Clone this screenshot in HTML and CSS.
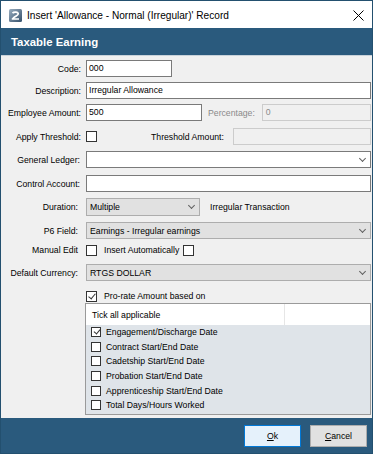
FILE: index.html
```html
<!DOCTYPE html>
<html>
<head>
<meta charset="utf-8">
<link rel="stylesheet" href="styles.css">
</head>
<body>
<div class="window">
  <div class="titlebar">
    <svg class="app-icon" width="13" height="13" viewBox="0 0 13 13">
      <defs>
        <linearGradient id="ig" x1="0" y1="0" x2="1" y2="1">
          <stop offset="0" stop-color="#9aaec0"/>
          <stop offset="1" stop-color="#34506b"/>
        </linearGradient>
      </defs>
      <rect x="0" y="0" width="13" height="13" rx="1.5" fill="url(#ig)"/>
      <path d="M3.5 4.2 C5 2.6 9.5 2.8 9.2 5 C9 6.4 6.8 6.8 5 8.4 L3.4 10 L10 10" fill="none" stroke="#fff" stroke-width="1.7" stroke-linejoin="round"/>
    </svg>
    <span class="title">Insert 'Allowance - Normal (Irregular)' Record</span>
    <svg class="close" width="11" height="11" viewBox="0 0 11 11">
      <path d="M0.5 0.5 L10.5 10.5 M10.5 0.5 L0.5 10.5" stroke="#000" stroke-width="1" fill="none"/>
    </svg>
  </div>
  <div class="header">Taxable Earning</div>
  <div class="form">
    <div class="row r-code">
      <span class="lbl">Code:</span>
      <div class="field"><span class="tb tb-code">000</span></div>
    </div>
    <div class="row r-desc">
      <span class="lbl">Description:</span>
      <div class="field"><span class="tb grow">Irregular Allowance</span></div>
    </div>
    <div class="row r-emp">
      <span class="lbl">Employee Amount:</span>
      <div class="field">
        <span class="tb tb-amt">500</span>
        <span class="txt disabled pct-lbl">Percentage:</span>
        <span class="tb tb-dis grow pct-in">0</span>
      </div>
    </div>
    <div class="row r-apply">
      <span class="lbl">Apply Threshold:</span>
      <div class="field">
        <span class="cb"></span>
        <span class="txt thr-lbl">Threshold Amount:</span>
        <span class="tb tb-dis grow thr-in"></span>
      </div>
    </div>
    <div class="row r-gl">
      <span class="lbl lbl-m">General Ledger:</span>
      <div class="field">
        <span class="tb grow combo-edit"><span class="chev"></span></span>
      </div>
    </div>
    <div class="row r-ctrl">
      <span class="lbl lbl-m">Control Account:</span>
      <div class="field"><span class="tb grow"></span></div>
    </div>
    <div class="row r-dur">
      <span class="lbl lbl-s">Duration:</span>
      <div class="field">
        <span class="combo combo-dur">Multiple<span class="chev"></span></span>
        <span class="txt irr">Irregular Transaction</span>
      </div>
    </div>
    <div class="row r-p6">
      <span class="lbl lbl-s">P6 Field:</span>
      <div class="field"><span class="combo grow">Earnings - Irregular earnings<span class="chev"></span></span></div>
    </div>
    <div class="row r-man">
      <span class="lbl lbl-s">Manual Edit</span>
      <div class="field">
        <span class="cb"></span>
        <span class="txt ins">Insert Automatically</span>
        <span class="cb"></span>
      </div>
    </div>
    <div class="row r-cur">
      <span class="lbl lbl-s">Default Currency:</span>
      <div class="field"><span class="combo grow">RTGS DOLLAR<span class="chev"></span></span></div>
    </div>
    <div class="row r-pro">
      <span class="lbl"></span>
      <div class="field">
        <span class="cb checked"></span>
        <span class="txt ins">Pro-rate Amount based on</span>
      </div>
    </div>
    <div class="row r-list">
      <span class="lbl"></span>
      <div class="listbox">
        <div class="list-head">
          <span class="col1">Tick all applicable</span>
          <span class="col2"></span>
        </div>
        <div class="list-items">
          <div class="item"><span class="cb sm checked"></span>Engagement/Discharge Date</div>
          <div class="item"><span class="cb sm"></span>Contract Start/End Date</div>
          <div class="item"><span class="cb sm"></span>Cadetship Start/End Date</div>
          <div class="item"><span class="cb sm"></span>Probation Start/End Date</div>
          <div class="item"><span class="cb sm"></span>Apprenticeship Start/End Date</div>
          <div class="item"><span class="cb sm"></span>Total Days/Hours Worked</div>
        </div>
      </div>
    </div>
  </div>
  <div class="footer">
    <span class="btn btn-ok"><u>O</u>k</span>
    <span class="btn"><u>C</u>ancel</span>
  </div>
</div>
</body>
</html>
```
FILE: styles.css
```css
* { box-sizing: border-box; }
html, body { margin: 0; padding: 0; background: #ffffff; }
body { font-family: "Liberation Sans", Arial, sans-serif; }

.window {
  width: 373px;
  height: 454px;
  border: 1px solid #23506f;
  display: flex;
  flex-direction: column;
  background: #f0f0f0;
}

.titlebar {
  height: 27px;
  flex: none;
  background: #ffffff;
  display: flex;
  align-items: center;
  padding-left: 8px;
  position: relative;
}
.app-icon { flex: none; margin-top: 1px; }
.title {
  font-size: 10.1px;
  color: #000;
  margin-left: 5px;
  margin-top: 1px;
}
.close { margin-left: auto; margin-right: 8px; margin-top: 1px; }

.header {
  height: 28px;
  flex: none;
  background: #2a5a7d;
  color: #ffffff;
  font-weight: bold;
  font-size: 11.4px;
  display: flex;
  align-items: center;
  padding-left: 10px;
  border-bottom: 1px solid #c8d2da;
}

.form {
  flex: none;
  height: 362px;
  padding: 4px 1px 0 0;
  display: flex;
  flex-direction: column;
  font-size: 8.7px;
  color: #000;
}

.row {
  display: grid;
  grid-template-columns: 80px 1fr;
  column-gap: 5px;
  align-items: center;
  height: 17px;
}
.lbl { text-align: right; white-space: nowrap; }
.lbl-m { padding-right: 1px; }
.lbl-s { padding-right: 3px; }
.field { display: flex; align-items: center; height: 100%; }

.r-desc { margin-top: 5px; }
.r-emp { margin-top: 5px; }
.r-apply { margin-top: 7px; }
.r-gl { margin-top: 6px; }
.r-ctrl { margin-top: 7px; }
.r-dur { margin-top: 6px; height: 18px; }
.r-p6 { margin-top: 6px; }
.r-man { margin-top: 4px; height: 14px; }
.r-cur { margin-top: 7px; }
.r-pro { margin-top: 9px; height: 12px; }
.r-list { margin-top: 1px; height: 112px; align-items: stretch; }

.tb {
  height: 17px;
  border: 1px solid #7a7a7a;
  background: #ffffff;
  padding-left: 2px;
  line-height: 15px;
  white-space: nowrap;
  position: relative;
  display: block;
}
.grow { flex: 1; }
.tb-code { width: 86px; }
.tb-amt { width: 116px; }
.tb-dis { background: #f0f0f0; border-color: #cccccc; color: #8a8a8a; }
.pct-lbl { margin-left: 6px; }
.pct-in { margin-left: 7px; padding-left: 3px; }
.thr-lbl { margin-left: 54px; }
.thr-in { margin-left: 9px; }
.disabled { color: #8a8a8a; }
.txt { white-space: nowrap; }
.irr { margin-left: 10px; }
.ins { margin-left: 7px; margin-right: 4px; }

.combo {
  height: 100%;
  border: 1px solid #adadad;
  background: #e1e1e1;
  padding-left: 3px;
  display: flex;
  align-items: center;
  position: relative;
  white-space: nowrap;
}
.combo-dur { width: 114px; }
.chev {
  position: absolute;
  right: 5px;
  top: 50%;
  width: 5px;
  height: 5px;
  margin-top: -4px;
  border-right: 1px solid #606060;
  border-bottom: 1px solid #606060;
  transform: rotate(45deg);
}

.cb {
  width: 11px;
  height: 11px;
  border: 1px solid #333333;
  background: #ffffff;
  flex: none;
  display: inline-block;
  position: relative;
}
.cb.checked::after {
  content: "";
  position: absolute;
  left: 3px;
  top: 0px;
  width: 3px;
  height: 6px;
  border-right: 1px solid #333;
  border-bottom: 1px solid #333;
  transform: rotate(40deg);
}
.cb.sm { width: 10px; height: 10px; margin-right: 5px; }
.cb.sm.checked::after { left: 3px; top: 0px; width: 3px; height: 5px; }

.listbox {
  border: 1px solid #9a9a9a;
  display: flex;
  flex-direction: column;
  margin-left: -1px;
  background: #dfe4e9;
}
.list-head {
  height: 21px;
  background: #ffffff;
  display: flex;
  flex: none;
}
.col1 { width: 199px; padding-left: 6px; display: flex; align-items: center; border-right: 1px solid #e6e6e6; }
.col2 { flex: 1; }
.list-items { padding-top: 0; }
.item {
  height: 14.6px;
  display: flex;
  align-items: center;
  padding-left: 5px;
  white-space: nowrap;
}

.footer {
  flex: 1;
  background: #2a5a7d;
  display: flex;
  justify-content: flex-end;
  align-items: flex-start;
  padding: 7px 5px 0 0;
  gap: 9px;
}
.btn {
  width: 57px;
  height: 22px;
  border: 1px solid #adadad;
  background: #e1e1e1;
  font-size: 8.7px;
  display: flex;
  align-items: center;
  justify-content: center;
  color: #000;
}
.btn-ok { border-color: #0078d7; background: #e5f1fb; }
```
